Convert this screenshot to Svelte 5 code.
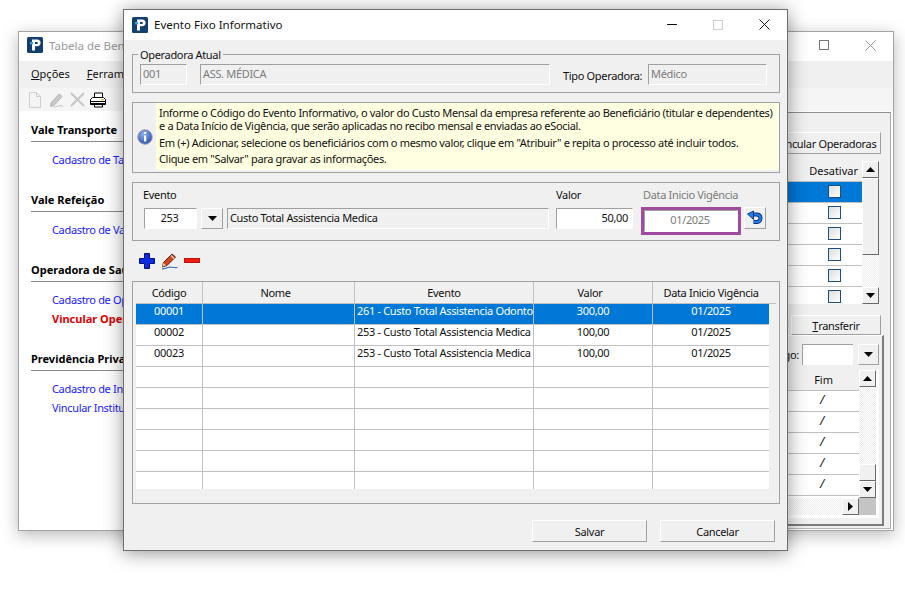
<script lang="ts">
	const widths = [67, 152, 179, 119, 116];
	const rows = [
		{ codigo: '00001', evento: '261 - Custo Total Assistencia Odontologica', valor: '300,00', data: '01/2025' },
		{ codigo: '00002', evento: '253 - Custo Total Assistencia Medica', valor: '100,00', data: '01/2025' },
		{ codigo: '00023', evento: '253 - Custo Total Assistencia Medica', valor: '100,00', data: '01/2025' },
		{ codigo: '', evento: '', valor: '', data: '' },
		{ codigo: '', evento: '', valor: '', data: '' },
		{ codigo: '', evento: '', valor: '', data: '' },
		{ codigo: '', evento: '', valor: '', data: '' },
		{ codigo: '', evento: '', valor: '', data: '' },
		{ codigo: '', evento: '', valor: '', data: '' }
	];
	const cols = widths.map((w) => w + 'px').join(' ');

	const navGroups = [
		{ title: 'Vale Transporte', links: [{ text: 'Cadastro de Tarifas' }] },
		{ title: 'Vale Refeição', links: [{ text: 'Cadastro de Valores' }] },
		{
			title: 'Operadora de Saúde',
			links: [{ text: 'Cadastro de Operadoras' }, { text: 'Vincular Operadoras', active: true }]
		},
		{
			title: 'Previdência Privada',
			links: [{ text: 'Cadastro de Instituições' }, { text: 'Vincular Instituições' }]
		}
	];
</script>

{#snippet logo(cls)}
	<svg class={cls} width="16" height="16" viewBox="0 0 16 16">
		<rect width="16" height="16" rx="1.5" fill="#123f6d" />
		<path d="M5 2.500h5.200c2.200 0 3.400 1.300 3.400 3.300s-1.300 3.500-3.500 3.500H8v4.200H5z M8 5v2h1.800c.7 0 1-.4 1-1s-.4-1-1-1z" fill="#fff" fill-rule="evenodd" />
		<rect x="3" y="5" width="3" height="2.400" fill="#35a6e6" />
	</svg>
{/snippet}

{#snippet arrow(dir)}
	<svg width="9" height="5" viewBox="0 0 9 5" class={dir}><path d="M0 0h9L4.500 5z" fill="#000" /></svg>
{/snippet}

<div class="desktop">
	<!-- janela de fundo -->
	<section class="window back">
		<header class="back-title">
			{@render logo('logo')}
			<span class="back-name">Tabela de Benefícios</span>
			<div class="caption-buttons dim">
				<span class="cap"><i class="max dark"></i></span>
				<span class="cap">
					<svg width="11" height="11" viewBox="0 0 11 11"><path d="M.5.5l10 10M10.500.5l-10 10" stroke="#9a9a9a" fill="none" /></svg>
				</span>
			</div>
		</header>
		<nav class="menu"><span><u>O</u>pções</span><span><u>F</u>erramentas</span></nav>
		<div class="toolbar">
			<svg width="16" height="16" viewBox="0 0 16 16"><path d="M2.500.5h7l4 4v11h-11z M9.500.5v4h4" fill="#f4f4f4" stroke="#cfcfcf" /></svg>
			<svg width="17" height="16" viewBox="0 0 17 16"><path d="M3 11L11 2l3 2.500-8 9-3.500 1z" fill="#c9c9c9" stroke="#b5b5b5" /><path d="M6 15c3 0 4-2 9-1" fill="none" stroke="#c4c4c4" /></svg>
			<svg width="15" height="15" viewBox="0 0 15 15"><path d="M1 1l13 13M14 1L1 14" stroke="#c6c6c6" stroke-width="2" fill="none" /></svg>
			<svg width="16" height="16" viewBox="0 0 16 16">
				<path d="M4.500 1h8v5h-8z" fill="#fff" stroke="#000" />
				<path d="M.5 7.500l2-2h11l2 2v5h-15z" fill="#fff" stroke="#000" />
				<path d="M1 9.500h14M1 11.500h14" stroke="#000" />
				<path d="M11 7h3v1.500h-3z" fill="#e8d44a" />
				<path d="M4.500 12.500h8v2.500h-8z" fill="#fff" stroke="#000" />
			</svg>
		</div>
		<div class="back-body">
			<aside class="nav">
				{#each navGroups as g}
					<h3>{g.title}</h3>
					<ul>
						{#each g.links as l}
							<li class:active={l.active}>{l.text}</li>
						{/each}
					</ul>
				{/each}
			</aside>
			<div class="outer-panel">
				<div class="btn vincular">Vincular Operadoras</div>
				<div class="mini-grid top-grid">
					<div class="mini-cols">
						<div class="mini-head">Desativar</div>
						{#each [0, 1, 2, 3, 4, 5] as i}
							<div class="mini-row" class:sel={i === 0}><span class="check"></span></div>
						{/each}
					</div>
					<div class="vscroll">
						<span class="sb">{@render arrow('up')}</span>
						<span class="thumb tall"></span>
						<span class="track"></span>
						<span class="sb">{@render arrow('')}</span>
					</div>
				</div>
				<div class="btn transferir"><u>T</u>ransferir</div>
				<div class="inner-panel">
					<div class="combo">
						<span>Código:</span>
						<span class="field"></span>
						<span class="btn drop">{@render arrow('')}</span>
					</div>
					<div class="mini-grid low-grid">
						<div class="low-main">
							<div class="mini-cols low-cols">
								<div class="mini-head">Fim</div>
								{#each [0, 1, 2, 3, 4] as i}
									<div class="mini-row slash">/</div>
								{/each}
							</div>
							<div class="vscroll low-v">
								<span class="sb">{@render arrow('up')}</span>
								<span class="track"></span>
								<span class="thumb short"></span>
								<span class="sb">{@render arrow('')}</span>
							</div>
						</div>
						<div class="hscroll">
							<span class="track"></span>
							<span class="sb side">{@render arrow('right')}</span>
							<span class="corner"></span>
						</div>
					</div>
				</div>
			</div>
		</div>
	</section>

	<!-- dialogo -->
	<section class="window dialog">
		<header class="title">
			{@render logo('logo')}
			<span class="name">Evento Fixo Informativo</span>
			<div class="caption-buttons">
				<span class="cap"><i class="min"></i></span>
				<span class="cap"><i class="max"></i></span>
				<span class="cap">
					<svg width="11" height="11" viewBox="0 0 11 11"><path d="M.5.5l10 10M10.500.5l-10 10" stroke="#111" fill="none" /></svg>
				</span>
			</div>
		</header>

		<div class="content">
			<div class="operadora">
				<span class="legend">Operadora Atual</span>
				<span class="input off w-cod">001</span>
				<span class="input off w-ass">ASS. MÉDICA</span>
				<span class="tipo">Tipo Operadora:</span>
				<span class="input off w-tipo">Médico</span>
			</div>

			<div class="info">
				<div class="info-icon">
					<svg width="16" height="16" viewBox="0 0 16 16">
						<defs>
							<radialGradient id="ig" cx="0.4" cy="0.3" r="0.8">
								<stop offset="0" stop-color="#8fb0ee" />
								<stop offset="1" stop-color="#2346a8" />
							</radialGradient>
						</defs>
						<circle cx="8" cy="8" r="7.200" fill="url(#ig)" stroke="#8e96a6" />
						<rect x="7" y="3" width="2.200" height="2" fill="#fff" />
						<rect x="7" y="6.500" width="2.200" height="6" fill="#fff" />
					</svg>
				</div>
				<div class="info-text">
					<p class="l1">Informe o Código do Evento Informativo, o valor do Custo Mensal da empresa referente ao Beneficiário (titular e dependentes)</p>
					<p class="l2">e a Data Início de Vigência, que serão aplicadas no recibo mensal e enviadas ao eSocial.</p>
					<p class="l3">Em (+) Adicionar, selecione os beneficiários com o mesmo valor, clique em "Atribuir" e repita o processo até incluir todos.</p>
					<p class="l4">Clique em "Salvar" para gravar as informações.</p>
				</div>
			</div>

			<div class="evento">
				<div class="f f-ev">
					<span class="lbl">Evento</span>
					<div class="ev-row">
						<span class="input on center w-ev">253</span>
						<span class="btn drop-ev">{@render arrow('')}</span>
						<span class="input off-dark w-desc">Custo Total Assistencia Medica</span>
					</div>
				</div>
				<div class="f f-val">
					<span class="lbl">Valor</span>
					<span class="input on txt-right w-val">50,00</span>
				</div>
				<div class="f f-data">
					<span class="lbl muted">Data Inicio Vigência</span>
					<div class="dt-row">
						<span class="hilite"><span class="input on center muted w-dt">01/2025</span></span>
						<span class="btn undo">
							<svg width="18" height="16" viewBox="0 0 18 16">
								<path d="M6 4.500h4.500c2.600 0 4 1.500 4 3.700 0 2.300-1.600 3.800-4 3.800H7.500" fill="none" stroke="#0a2f7c" stroke-width="4" />
								<path d="M6 4.500h4.500c2.600 0 4 1.500 4 3.700 0 2.300-1.600 3.800-4 3.800H7.500" fill="none" stroke="#1f7fe8" stroke-width="2.200" />
								<path d="M1.500 4l6-3v8.500z" fill="#1f7fe8" stroke="#0a2f7c" stroke-width=".9" />
							</svg>
						</span>
					</div>
				</div>
			</div>

			<div class="tools">
				<svg width="16" height="16" viewBox="0 0 16 16"><path d="M5.500.5h5v5h5v5h-5v5h-5v-5h-5v-5h5z" fill="#0a2be0" stroke="#00107a" /></svg>
				<svg width="17" height="17" viewBox="0 0 17 17">
					<path d="M2.500 9.500L11 1l3.500 3L6 12.500l-4.500 1.500z" fill="#d8421c" stroke="#3a1008" stroke-width=".9" />
					<path d="M10 2.500l3 3" stroke="#f4e0c0" stroke-width="1.300" />
					<path d="M2.500 10l2.500 2.300-3.500 1.500z" fill="#f0d8a8" />
					<path d="M1 16c4.500 0 5.500-2.500 9.500-1.800 2.500.4 4 .6 6 .3" fill="none" stroke="#2255b5" />
				</svg>
				<svg width="16" height="16" viewBox="0 0 16 16"><rect x=".5" y="5.500" width="15" height="4" fill="#f01c14" stroke="#c01010" /></svg>
			</div>

			<div class="grid-box">
				<div class="grid-head" style="grid-template-columns: {cols}">
					<div>Código</div><div class="off-c">Nome</div><div>Evento</div><div class="off-c">Valor</div><div>Data Inicio Vigência</div>
				</div>
				<div class="grid-body">
					{#each rows as r, i}
						<div class="grid-row" class:selected={i === 0} style="grid-template-columns: {cols}">
							<div>{r.codigo}</div>
							<div></div>
							<div class="ev">{r.evento}</div>
							<div>{r.valor}</div>
							<div>{r.data}</div>
						</div>
					{/each}
				</div>
			</div>

			<footer class="actions">
				<div class="btn action">Salvar</div>
				<div class="btn action">Cancelar</div>
			</footer>
		</div>
	</section>
</div>

<style>
	:global(body) {
		margin: 0;
		background: #fff;
	}

	.desktop {
		position: relative;
		width: 905px;
		height: 600px;
		overflow: hidden;
		font-family: 'Noto Sans', sans-serif;
		font-size: 11px;
		color: #111;
	}

	.window {
		position: absolute;
		box-sizing: border-box;
		display: flex;
		flex-direction: column;
		background: #f0f0f0;
	}

	/* janela de fundo */
	.back {
		left: 18px;
		top: 31px;
		width: 876px;
		height: 500px;
		border: 1px solid #a3a3a3;
		box-shadow: 0 4px 16px rgba(0, 0, 0, 0.28);
	}

	.back-title {
		height: 29px;
		flex: none;
		box-sizing: border-box;
		background: #fff;
		display: flex;
		align-items: center;
		padding: 0 0 3px 8px;
	}

	.back-name {
		margin-left: 6px;
		font-size: 11.500px;
		color: #999;
	}

	.menu {
		height: 27px;
		flex: none;
		box-sizing: border-box;
		display: flex;
		gap: 17px;
		align-items: center;
		padding: 0 0 2px 12px;
	}

	.toolbar {
		height: 23px;
		flex: none;
		display: flex;
		gap: 5px;
		align-items: center;
		padding-left: 8px;
		background: #f5f5f5;
	}

	.back-body {
		flex: 1;
		min-height: 0;
		display: flex;
		justify-content: space-between;
		background: #fff;
	}

	.nav {
		padding: 10px 0 0 12px;
		width: 300px;
	}

	.nav h3 {
		margin: 0;
		font-size: 11px;
		font-weight: 700;
		height: 20px;
		line-height: 17px;
		border-bottom: 1px solid #8a8a8a;
		color: #000;
	}

	.nav ul {
		list-style: none;
		margin: 0 0 22px;
		padding: 8px 0 0 21px;
		line-height: 19px;
		letter-spacing: -0.33px;
		color: #1a1aff;
	}

	.nav li {
		height: 19px;
		white-space: nowrap;
	}

	.nav li.active {
		color: #e00000;
		font-weight: 700;
		letter-spacing: 0;
	}

	.outer-panel {
		box-sizing: border-box;
		width: 200px;
		margin: 1px 2px 1px 0;
		border: 1px solid #8f8f8f;
		border-bottom-color: #b5b5b5;
		border-right-color: #a8a8a8;
		background: #f0f0f0;
		padding: 19px 9px 0 0;
		display: flex;
		flex-direction: column;
		align-items: flex-end;
		letter-spacing: -0.33px;
	}

	.vincular {
		box-sizing: border-box;
		width: 109px;
		height: 22px;
		flex: none;
		white-space: nowrap;
	}

	.mini-grid {
		flex: none;
		background: #fff;
		box-sizing: border-box;
	}

	.top-grid {
		display: flex;
		width: 120px;
		margin: 7px 2px 0 0;
		height: 143px;
		background: #f0f0f0;
	}

	.mini-cols {
		flex: 1;
		overflow: hidden;
		background: #fff;
	}

	.mini-head {
		box-sizing: border-box;
		height: 21px;
		line-height: 20px;
		background: #f0f0f0;
		text-align: right;
		padding-right: 4px;
		border-bottom: 1px solid #c0c0c0;
		letter-spacing: 0;
	}

	.top-grid .mini-head {
		background: linear-gradient(to right, #f0f0f0 16px, #bbb 16px, #bbb 17px, #f0f0f0 17px);
	}

	.mini-row {
		box-sizing: border-box;
		height: 21px;
		border-bottom: 1px solid #c0c0c0;
		display: flex;
		align-items: center;
		justify-content: flex-end;
		padding-right: 21px;
	}

	.top-grid .mini-row {
		background: linear-gradient(to right, #fff 16px, #bbb 16px, #bbb 17px, #fff 17px);
	}

	.top-grid .mini-row.sel {
		background: #0078d7;
	}

	.check {
		box-sizing: border-box;
		width: 13px;
		height: 13px;
		border: 1px solid #1c4f80;
		background: linear-gradient(135deg, #ddd, #fff);
		margin-bottom: 2px;
	}

	.vscroll {
		width: 17px;
		flex: none;
		display: flex;
		flex-direction: column;
		background: repeating-conic-gradient(#fff 0 25%, #ececec 0 50%) 0 0 / 2px 2px;
	}

	.sb {
		box-sizing: border-box;
		height: 17px;
		width: 17px;
		flex: none;
		background: #f0f0f0;
		border: 1px solid;
		border-color: #fff #696969 #696969 #fff;
		display: flex;
		align-items: center;
		justify-content: center;
	}

	.thumb {
		box-sizing: border-box;
		flex: none;
		background: #f0f0f0;
		border: 1px solid;
		border-color: #fff #696969 #696969 #fff;
	}

	.thumb.tall {
		height: 77px;
	}

	.thumb.short {
		height: 17px;
	}

	.track {
		flex: 1;
	}

	.up {
		transform: rotate(180deg);
	}

	.right {
		transform: rotate(-90deg);
	}

	.transferir {
		box-sizing: border-box;
		width: 90px;
		height: 20px;
		flex: none;
		margin: 11px 0 0;
	}

	.inner-panel {
		box-sizing: border-box;
		width: 250px;
		flex: 1;
		min-height: 0;
		margin-right: -3px;
		margin-bottom: 2px;
		padding: 8px 3px 0 0;
		border-top: 1px solid #fff;
		border-right: 2px solid #7c7c7c;
		border-bottom: 2px solid #7c7c7c;
		display: flex;
		flex-direction: column;
		align-items: flex-end;
	}

	.combo {
		display: flex;
		align-items: center;
		height: 21px;
		flex: none;
		gap: 3px;
		width: 100%;
		justify-content: flex-end;
	}

	.field {
		box-sizing: border-box;
		width: 51px;
		height: 21px;
		background: #fff;
		border-top: 1px solid #a0a0a0;
		border-left: 1px solid #a0a0a0;
		margin-right: 2px;
	}

	.drop {
		width: 21px;
		height: 21px;
		box-sizing: border-box;
	}

	.low-grid {
		width: 100%;
		margin-top: 5px;
		padding: 0 3px 3px 0;
		background: #fff;
		display: flex;
		flex-direction: column;
	}

	.low-main {
		display: flex;
		height: 128px;
	}

	.low-cols .mini-head {
		text-align: right;
		padding-right: 26px;
	}

	.slash {
		justify-content: flex-end;
		padding: 0 35px 4px 0;
		font-size: 12px;
		font-style: italic;
	}

	.low-v {
		width: 17px;
	}

	.hscroll {
		display: flex;
		height: 17px;
		background: repeating-conic-gradient(#fff 0 25%, #ececec 0 50%) 0 0 / 2px 2px;
	}

	.corner {
		width: 17px;
		background: #c4c4c4;
	}

	/* dialogo */
	.dialog {
		left: 123px;
		top: 9px;
		width: 665px;
		height: 542px;
		border: 1px solid #6f6f6f;
		box-shadow: 0 2px 18px rgba(0, 0, 0, 0.42);
	}

	.title {
		height: 30px;
		flex: none;
		box-sizing: border-box;
		background: #fff;
		display: flex;
		align-items: center;
		padding: 0 0 1px 8px;
	}

	.name {
		margin-left: 6px;
		font-size: 11.500px;
		color: #111;
	}

	.logo {
		flex: none;
	}

	.caption-buttons {
		margin-left: auto;
		display: flex;
	}

	.cap {
		width: 46px;
		height: 27px;
		display: flex;
		align-items: center;
		justify-content: center;
	}

	.min {
		width: 10px;
		height: 1px;
		background: #111;
	}

	.max {
		box-sizing: border-box;
		width: 10px;
		height: 10px;
		border: 1px solid #cfcfcf;
	}

	.max.dark {
		border-color: #777;
	}

	.content {
		flex: 1;
		display: flex;
		flex-direction: column;
		padding: 14px 7px 0 8px;
		min-height: 0;
		letter-spacing: -0.33px;
	}

	.operadora {
		box-sizing: border-box;
		height: 39px;
		flex: none;
		padding: 0 0 0 7px;
		border: 1px solid #a0a0a0;
		display: flex;
		align-items: center;
		position: relative;
	}

	.legend {
		position: absolute;
		left: 5px;
		top: -8px;
		padding: 0 2px;
		line-height: 15px;
		background: #f0f0f0;
	}

	.input {
		box-sizing: border-box;
		display: block;
		height: 21px;
		line-height: 18px;
		padding: 0 4px 0 2px;
		border: 1px solid;
		border-color: #a0a0a0 #fff #fff #a0a0a0;
		white-space: nowrap;
	}

	.off {
		color: #7c7c7c;
		background: #f0f0f0;
	}

	.off-dark {
		color: #111;
		background: #f0f0f0;
	}

	.on {
		background: #fff;
		color: #111;
	}

	.center {
		text-align: center;
	}

	.txt-right {
		text-align: right;
	}

	.w-cod {
		width: 47px;
		margin-top: 2px;
	}

	.w-ass {
		width: 350px;
		margin: 2px 0 0 13px;
	}

	.tipo {
		margin: 3px 6px 0 13px;
		width: 79px;
		white-space: nowrap;
	}

	.w-tipo {
		width: 119px;
		margin-top: 2px;
	}

	.info {
		box-sizing: border-box;
		margin-top: 9px;
		height: 71px;
		flex: none;
		display: flex;
		border: 1px solid #a0a0a0;
	}

	.info-icon {
		width: 23px;
		flex: none;
		display: flex;
		align-items: center;
		justify-content: center;
		padding: 0 0 2px 1px;
		box-sizing: border-box;
	}

	.info-text {
		flex: 1;
		min-width: 0;
		background: #ffffe1;
		height: 67px;
		padding: 3px 0 0 3px;
		box-sizing: border-box;
	}

	.info-text p {
		margin: 0;
		white-space: nowrap;
		line-height: 13px;
		height: 13px;
	}

	.info-text .l3 {
		margin-top: 4px;
	}

	.info-text .l4 {
		margin-top: 3px;
	}

	.evento {
		box-sizing: border-box;
		margin-top: 9px;
		height: 59px;
		flex: none;
		border: 1px solid #a0a0a0;
		display: flex;
		padding: 5px 0 0 11px;
	}

	.f {
		display: flex;
		flex-direction: column;
	}

	.lbl {
		height: 20px;
		line-height: 13px;
	}

	.f-ev .lbl {
		margin-left: -1px;
	}

	.ev-row,
	.dt-row {
		display: flex;
	}

	.w-ev {
		width: 53px;
	}

	.drop-ev {
		box-sizing: border-box;
		width: 22px;
		height: 21px;
		margin: 0 4px;
	}

	.w-desc {
		width: 322px;
	}

	.f-val {
		margin-left: 7px;
	}

	.w-val {
		width: 77px;
	}

	.f-data {
		margin-left: 8px;
	}

	.f-data .lbl {
		padding-left: 2px;
	}

	.dt-row {
		margin-top: -1px;
	}

	.hilite {
		display: block;
		box-sizing: border-box;
		width: 100px;
		height: 28px;
		border: 3px solid #a04aa0;
	}

	.w-dt {
		width: 94px;
		height: 22px;
	}

	.muted {
		color: #7a7a7a;
	}

	.undo {
		box-sizing: border-box;
		width: 22px;
		height: 22px;
		margin-left: 3px;
	}

	.tools {
		height: 40px;
		flex: none;
		display: flex;
		gap: 6px;
		align-items: center;
		padding-left: 7px;
		box-sizing: border-box;
	}

	.grid-box {
		box-sizing: border-box;
		height: 223px;
		flex: none;
		border: 1px solid #a0a0a0;
		padding: 0 3px 14px 3px;
		display: flex;
		flex-direction: column;
	}

	.grid-head {
		display: grid;
		height: 22px;
		flex: none;
		border-bottom: 1px solid #c0c0c0;
		box-sizing: border-box;
		line-height: 21px;
		text-align: center;
	}

	.grid-head > div {
		box-sizing: border-box;
		border-right: 1px solid #c0c0c0;
	}

	.grid-head > div:last-child {
		border-right: 0;
	}

	.grid-head > .off-c {
		padding-right: 6px;
	}

	.grid-body {
		flex: 1;
		overflow: hidden;
		background: #fff;
		width: 633px;
	}

	.grid-row {
		display: grid;
		height: 21px;
		box-sizing: border-box;
		border-bottom: 1px solid #c0c0c0;
		line-height: 13px;
		text-align: center;
	}

	.grid-row > div {
		box-sizing: border-box;
		border-right: 1px solid #c0c0c0;
		overflow: hidden;
		white-space: nowrap;
	}

	.grid-row > div:last-child {
		border-right: 0;
	}

	.grid-row .ev {
		text-align: left;
		padding-left: 2px;
	}

	.grid-row.selected {
		background: #0078d7;
		color: #fff;
	}

	.actions {
		display: flex;
		justify-content: flex-end;
		gap: 13px;
		margin-top: 16px;
		padding-right: 5px;
	}

	.btn {
		display: flex;
		align-items: center;
		justify-content: center;
		border: 1px solid;
		border-color: #fff #a0a0a0 #a0a0a0 #fff;
		background: #f0f0f0;
	}

	.action {
		box-sizing: border-box;
		width: 115px;
		height: 22px;
	}
</style>
